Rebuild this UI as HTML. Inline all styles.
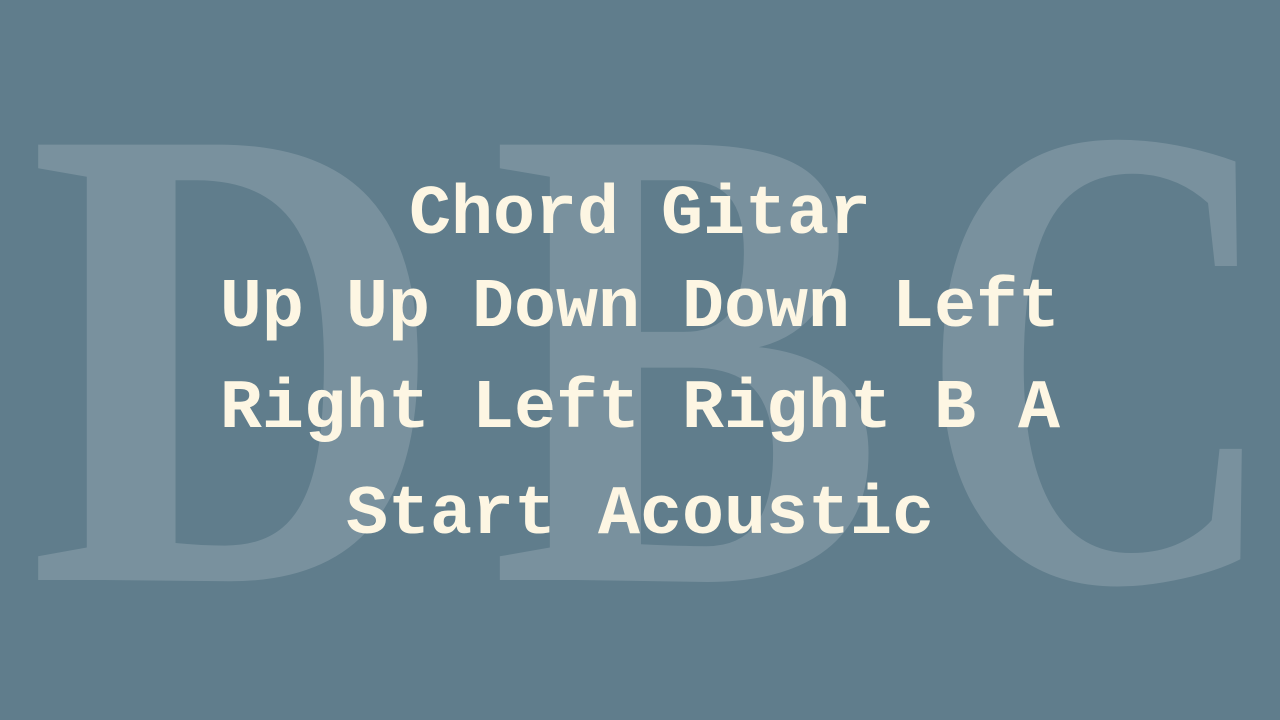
<!DOCTYPE html>
<html><head><meta charset="utf-8"><style>
html,body{margin:0;padding:0;}
body{width:1280px;height:720px;background:#607d8c;position:relative;overflow:hidden;}
.bg{position:absolute;top:0;left:0;}
.t{position:absolute;left:0;width:1280px;text-align:center;font-family:"Liberation Mono",monospace;font-weight:bold;font-size:70px;color:#fdf6e3;line-height:100px;white-space:pre;}
</style></head><body>
<svg class="bg" width="1280" height="720">
<g fill="#ffffff" fill-opacity="0.16" font-family="Liberation Serif, serif" font-weight="bold" font-size="665">
<text x="28" y="580" textLength="418" lengthAdjust="spacingAndGlyphs">D</text>
<text x="490" y="580" textLength="395" lengthAdjust="spacingAndGlyphs">B</text>
<text x="918" y="580" textLength="362" lengthAdjust="spacingAndGlyphs">C</text>
</g>
</svg>
<div class="t" style="top:166px">Chord Gitar</div>
<div class="t" style="top:259px">Up Up Down Down Left</div>
<div class="t" style="top:360px">Right Left Right B A</div>
<div class="t" style="top:466px">Start Acoustic</div>
</body></html>
